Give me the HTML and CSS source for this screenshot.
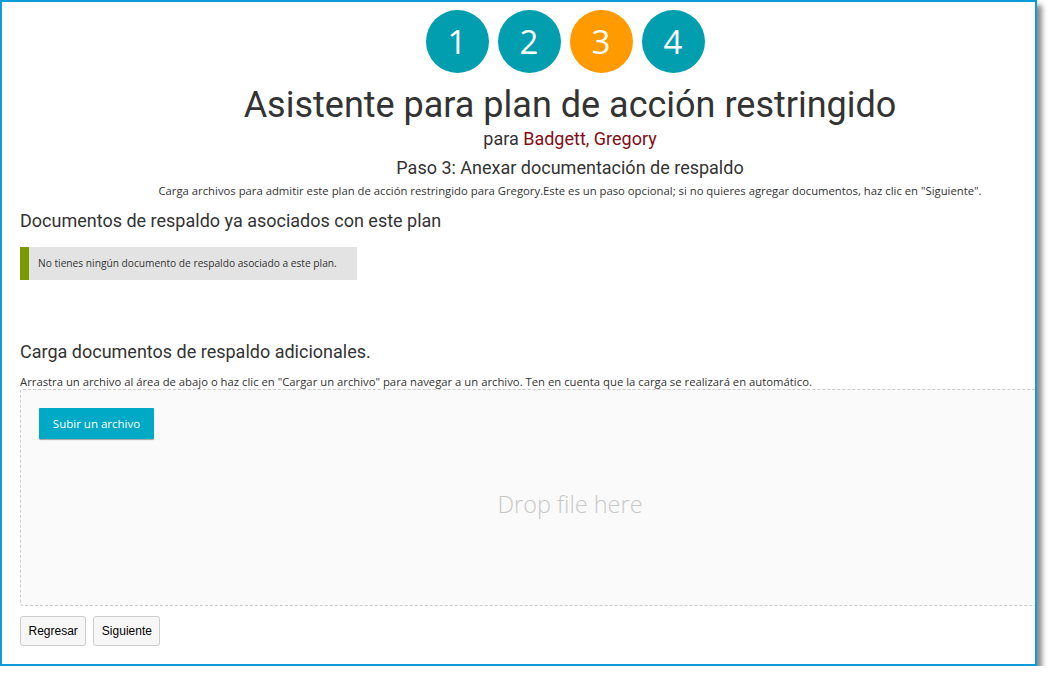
FILE: index.html
```html
<!DOCTYPE html>
<html lang="es">
<head>
<meta charset="utf-8">
<title>Asistente para plan de acción restringido</title>
<link rel="stylesheet" href="styles.css">
</head>
<body>
<div class="frame">
  <div class="page">
    <div class="steps">
      <span class="step">1</span>
      <span class="step">2</span>
      <span class="step current">3</span>
      <span class="step">4</span>
    </div>
    <h1 class="title">Asistente para plan de acción restringido</h1>
    <div class="subject">para <span class="name">Badgett, Gregory</span></div>
    <h2 class="step-title">Paso 3: Anexar documentación de respaldo</h2>
    <p class="intro">Carga archivos para admitir este plan de acción restringido para Gregory.Este es un paso opcional; si no quieres agregar documentos, haz clic en "Siguiente".</p>

    <h3 class="section-title first">Documentos de respaldo ya asociados con este plan</h3>
    <div class="notice">No tienes ningún documento de respaldo asociado a este plan.</div>

    <h3 class="section-title second">Carga documentos de respaldo adicionales.</h3>
    <p class="hint">Arrastra un archivo al área de abajo o haz clic en "Cargar un archivo" para navegar a un archivo. Ten en cuenta que la carga se realizará en automático.</p>
    <div class="dropzone">
      <button class="upload-btn" type="button">Subir un archivo</button>
      <div class="drop-text">Drop file here</div>
    </div>

    <div class="actions">
      <button class="btn" type="button">Regresar</button>
      <button class="btn" type="button">Siguiente</button>
    </div>
  </div>
</div>
</body>
</html>
```
FILE: styles.css
```css
html, body {
  margin: 0;
  padding: 0;
  background: #ffffff;
}

body {
  font-family: "Open Sans", "Noto Sans", sans-serif;
  color: #333333;
}

.frame {
  box-sizing: border-box;
  width: 1037px;
  height: 666px;
  border: 2px solid #0c9cd8;
  background: #ffffff;
  box-shadow: 5px 5px 5px rgba(0, 0, 0, 0.45);
  overflow: hidden;
}

.page {
  width: 1100px;
  margin-left: 18px;
  padding-top: 8px;
}

.steps {
  display: flex;
  justify-content: center;
  gap: 9px;
  height: 63px;
  padding-right: 10px;
}

.step {
  width: 63px;
  height: 63px;
  border-radius: 50%;
  background: #009eaf;
  color: #ffffff;
  font-family: "Open Sans", sans-serif;
  font-size: 33px;
  line-height: 63px;
  text-align: center;
}

.step.current {
  background: #ff9a00;
}

.title {
  margin: 10px 0 0;
  font-family: Roboto, "Liberation Sans", sans-serif;
  font-weight: 400;
  font-size: 36px;
  line-height: 44px;
  text-align: center;
  color: #333333;
}

.subject {
  margin-top: 1px;
  font-family: Roboto, "Liberation Sans", sans-serif;
  font-size: 18px;
  line-height: 22px;
  text-align: center;
}

.name {
  color: #820c16;
}

.step-title {
  margin: 7px 0 0;
  font-family: Roboto, "Liberation Sans", sans-serif;
  font-weight: 400;
  font-size: 18px;
  line-height: 22px;
  text-align: center;
}

.intro {
  margin: 4px 0 0;
  font-size: 11.3px;
  line-height: 15px;
  text-align: center;
}

.section-title {
  margin: 0;
  font-family: Roboto, "Liberation Sans", sans-serif;
  font-weight: 400;
  font-size: 18px;
  line-height: 24px;
}

.section-title.first {
  margin-top: 11px;
}

.section-title.second {
  margin-top: 60px;
}

.notice {
  box-sizing: border-box;
  width: 337px;
  height: 33px;
  margin-top: 14px;
  padding-left: 9px;
  border-left: 9px solid #7a9a00;
  background: #e3e3e3;
  font-size: 10.2px;
  line-height: 33px;
}

.hint {
  margin: 10px 0 0;
  font-size: 11.3px;
  line-height: 15px;
}

.dropzone {
  box-sizing: border-box;
  height: 217px;
  padding: 18px 18px 0;
  border: 1px dashed #cccccc;
  border-radius: 3px;
  background: #fafafa;
}

.upload-btn {
  display: block;
  width: 115px;
  height: 31px;
  padding: 0;
  border: none;
  border-radius: 1px;
  background: #00a9c6;
  box-shadow: 0 1px 1px rgba(0, 0, 0, 0.35);
  color: #ffffff;
  font-family: "Open Sans", sans-serif;
  font-size: 11.5px;
}

.drop-text {
  margin-top: 50px;
  font-family: "Open Sans", sans-serif;
  font-weight: 300;
  font-size: 23.5px;
  line-height: 30px;
  text-align: center;
  color: #c8c8c8;
}

.actions {
  display: flex;
  gap: 7px;
  margin-top: 10px;
}

.btn {
  height: 30px;
  padding: 0 7.5px;
  border: 1px solid #cccccc;
  border-radius: 3px;
  background: #f7f7f7;
  color: #000000;
  font-family: "Liberation Sans", Arial, sans-serif;
  font-size: 12px;
}
```
